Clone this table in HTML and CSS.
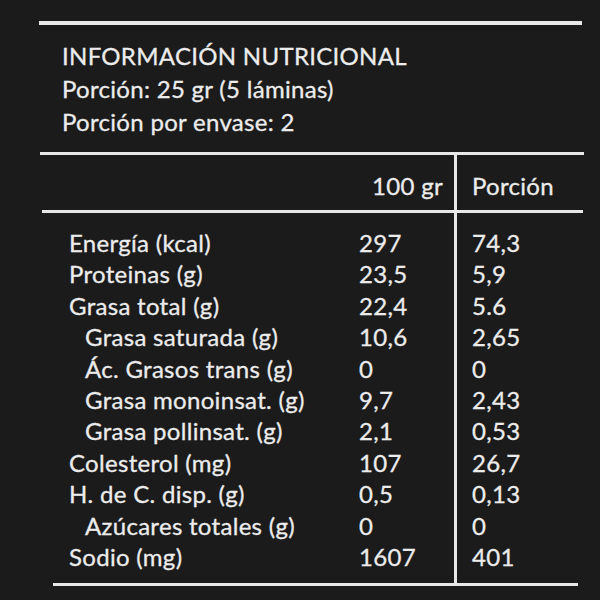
FILE: index.html
```html
<!DOCTYPE html>
<html lang="es">
<head>
<meta charset="utf-8">
<title>Información nutricional</title>
<link rel="stylesheet" href="styles.css">
</head>
<body>
<div class="label">
  <div class="rule rule-top"></div>
  <div class="intro">
    <div class="title">INFORMACIÓN NUTRICIONAL</div>
    <div>Porción: 25 gr (5 láminas)</div>
    <div>Porción por envase: 2</div>
  </div>
  <div class="rule rule-mid"></div>
  <div class="thead">
    <div class="c-label"></div>
    <div class="c-100 h100">100 gr</div>
    <div class="c-por hpor">Porción</div>
  </div>
  <div class="rule rule-mid2"></div>
  <div class="tbody">
    <div class="c-label col">
      <div class="l0">Energía (kcal)</div>
      <div class="l0">Proteinas (g)</div>
      <div class="l0">Grasa total (g)</div>
      <div class="l1">Grasa saturada (g)</div>
      <div class="l1">Ác. Grasos trans (g)</div>
      <div class="l1">Grasa monoinsat. (g)</div>
      <div class="l1">Grasa pollinsat. (g)</div>
      <div class="l0">Colesterol (mg)</div>
      <div class="l0">H. de C. disp. (g)</div>
      <div class="l1">Azúcares totales (g)</div>
      <div class="l0">Sodio (mg)</div>
    </div>
    <div class="c-100 col">
      <div>297</div>
      <div>23,5</div>
      <div>22,4</div>
      <div>10,6</div>
      <div>0</div>
      <div>9,7</div>
      <div>2,1</div>
      <div>107</div>
      <div>0,5</div>
      <div>0</div>
      <div>1607</div>
    </div>
    <div class="c-por col">
      <div>74,3</div>
      <div>5,9</div>
      <div>5.6</div>
      <div>2,65</div>
      <div>0</div>
      <div>2,43</div>
      <div>0,53</div>
      <div>26,7</div>
      <div>0,13</div>
      <div>0</div>
      <div>401</div>
    </div>
  </div>
  <div class="rule rule-bottom"></div>
</div>
</body>
</html>
```
FILE: styles.css
```css
html, body {
  margin: 0;
  padding: 0;
  background: #1b1b1b;
}
body {
  width: 600px;
  height: 600px;
  overflow: hidden;
  font-family: Lato, "Open Sans", sans-serif;
  color: #ececec;
  font-size: 24px;
  letter-spacing: 0.3px;
  -webkit-text-stroke: 0.3px #ececec;
}
.label {
  margin-left: 39px;
  width: 545px;
  padding-top: 21px;
}
.rule {
  background: #e8e8e8;
  height: 4px;
}
.rule-top {
  width: 543px;
}
.intro {
  padding: 14px 0 14px 23px;
  line-height: 33px;
}
.rule-mid {
  height: 3px;
  margin-left: 1px;
}
.thead, .tbody {
  display: flex;
}
.c-label {
  width: 320px;
}
.c-100 {
  width: 95px;
}
.c-por {
  flex: 1;
  border-left: 3px solid #e8e8e8;
  padding-left: 15px;
}
.thead > div {
  height: 55px;
  line-height: 62px;
}
.h100 {
  text-align: right;
  padding-right: 11px;
  box-sizing: border-box;
}
.rule-mid2 {
  height: 3px;
  margin-left: 3px;
  width: 541px;
}
.tbody .col {
  padding-top: 14px;
  padding-bottom: 11px;
  line-height: 31.4px;
}
.l0 {
  padding-left: 30px;
}
.l1 {
  padding-left: 46px;
}
.rule-bottom {
  height: 3px;
  margin-left: 14px;
  width: 525px;
}
```
